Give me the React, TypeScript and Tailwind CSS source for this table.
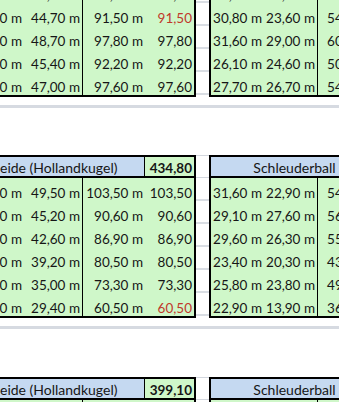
import React from "react";

type LeftRow = { a: string; b: string; c: string; d: string; red?: boolean };
type RightRow = { e: string; f: string; g: string };

const cell = "flex items-end justify-end pr-[2px] leading-[16px] whitespace-nowrap";

const sec1Left: LeftRow[] = [
  { a: "45,20 m", b: "48,30 m", c: "93,50 m", d: "93,50" },
  { a: "46,80 m", b: "44,70 m", c: "91,50 m", d: "91,50", red: true },
  { a: "49,10 m", b: "48,70 m", c: "97,80 m", d: "97,80" },
  { a: "46,80 m", b: "45,40 m", c: "92,20 m", d: "92,20" },
  { a: "50,60 m", b: "47,00 m", c: "97,60 m", d: "97,60" },
];
const sec1Right: RightRow[] = [
  { e: "28,40 m", f: "25,10 m", g: "53,50 m" },
  { e: "30,80 m", f: "23,60 m", g: "54,40 m" },
  { e: "31,60 m", f: "29,00 m", g: "60,60 m" },
  { e: "26,10 m", f: "24,60 m", g: "50,70 m" },
  { e: "27,70 m", f: "26,70 m", g: "54,40 m" },
];

const sec2Left: LeftRow[] = [
  { a: "54,00 m", b: "49,50 m", c: "103,50 m", d: "103,50" },
  { a: "45,40 m", b: "45,20 m", c: "90,60 m", d: "90,60" },
  { a: "44,30 m", b: "42,60 m", c: "86,90 m", d: "86,90" },
  { a: "41,30 m", b: "39,20 m", c: "80,50 m", d: "80,50" },
  { a: "38,30 m", b: "35,00 m", c: "73,30 m", d: "73,30" },
  { a: "31,10 m", b: "29,40 m", c: "60,50 m", d: "60,50", red: true },
];
const sec2Right: RightRow[] = [
  { e: "31,60 m", f: "22,90 m", g: "54,50 m" },
  { e: "29,10 m", f: "27,60 m", g: "56,70 m" },
  { e: "29,60 m", f: "26,30 m", g: "55,90 m" },
  { e: "23,40 m", f: "20,30 m", g: "43,70 m" },
  { e: "25,80 m", f: "23,80 m", g: "49,60 m" },
  { e: "22,90 m", f: "13,90 m", g: "36,80 m" },
];

const sec3Left: LeftRow[] = [
  { a: "47,60 m", b: "46,10 m", c: "93,70 m", d: "93,70" },
];
const sec3Right: RightRow[] = [{ e: "28,20 m", f: "24,50 m", g: "52,70 m" }];

function LeftBlock({ title, total, rows }: { title?: string; total?: string; rows: LeftRow[] }) {
  return (
    <div className={`flex flex-col border-r-2 border-b-2 border-black ${title ? "border-t-2" : ""}`}>
      {title && (
        <div className="flex h-[21px] border-b-2 border-black">
          <div className="w-[182px] flex items-end justify-center text-[14px] leading-[16px] bg-[#c5d9f1] border-r border-black whitespace-nowrap">
            {title}
          </div>
          <div className={`w-[49px] ${cell} pr-[1px] bg-[#cff7c9] font-bold`}>{total}</div>
        </div>
      )}
      {rows.map((r, i) => (
        <div key={i} className="flex h-[23px] bg-[#cff7c9]">
          <div className={`w-[61px] ${cell}`}>{r.a}</div>
          <div className={`w-[59px] ${cell} pr-[1px] border-r border-black`}>{r.b}</div>
          <div className={`w-[62px] ${cell}`}>{r.c}</div>
          <div className={`w-[49px] ${cell} pr-[1px] ${r.red ? "text-[#c0392b]" : ""}`}>{r.d}</div>
        </div>
      ))}
    </div>
  );
}

function GapColumn({ count, header }: { count: number; header?: boolean }) {
  return (
    <div className="flex flex-col w-[13px]">
      {header && <div className="h-[23px] border-t border-b border-[#d3d7de]" />}
      {Array.from({ length: count }).map((_, i) => (
        <div key={i} className="h-[23px] border-b-2 border-[#d9dde3]" />
      ))}
    </div>
  );
}

function RightBlock({ title, rows }: { title?: string; rows: RightRow[] }) {
  return (
    <div className={`flex flex-col w-[169px] border-l-2 border-b-2 border-black ${title ? "border-t-2" : ""}`}>
      {title && (
        <div className="flex h-[21px] border-b-2 border-black">
          <div className="w-[167px] flex items-end justify-center text-[14px] leading-[16px] bg-[#c5d9f1] whitespace-nowrap">
            {title}
          </div>
        </div>
      )}
      {rows.map((r, i) => (
        <div key={i} className="flex h-[23px] bg-[#cff7c9]">
          <div className={`w-[53px] ${cell}`}>{r.e}</div>
          <div className={`w-[54px] ${cell} pr-[1px] border-r border-black`}>{r.f}</div>
          <div className={`w-[60px] ${cell}`}>{r.g}</div>
        </div>
      ))}
    </div>
  );
}

function Separator({ after }: { after: string }) {
  return (
    <>
      <div className="h-[8px]" />
      <div className="h-[3px] w-full bg-[#d6dae1]" />
      <div className={after} />
    </>
  );
}

export default function App() {
  return (
    <div className="w-[339px] h-[402px] overflow-hidden bg-white text-[13.5px] text-[#161616] font-[Lato,sans-serif]">
      <div className="flex flex-col w-[440px] -ml-[37px] -mt-[20px]">
        <div className="flex items-start">
          <LeftBlock rows={sec1Left} />
          <GapColumn count={5} />
          <RightBlock rows={sec1Right} />
        </div>
        <Separator after="h-[47px]" />
        <div className="flex items-start">
          <LeftBlock title="Heide (Hollandkugel)" total="434,80" rows={sec2Left} />
          <GapColumn count={6} header />
          <RightBlock title="Schleuderball" rows={sec2Right} />
        </div>
        <Separator after="h-[48px]" />
        <div className="flex items-start">
          <LeftBlock title="Heide (Hollandkugel)" total="399,10" rows={sec3Left} />
          <GapColumn count={1} header />
          <RightBlock title="Schleuderball" rows={sec3Right} />
        </div>
      </div>
    </div>
  );
}
